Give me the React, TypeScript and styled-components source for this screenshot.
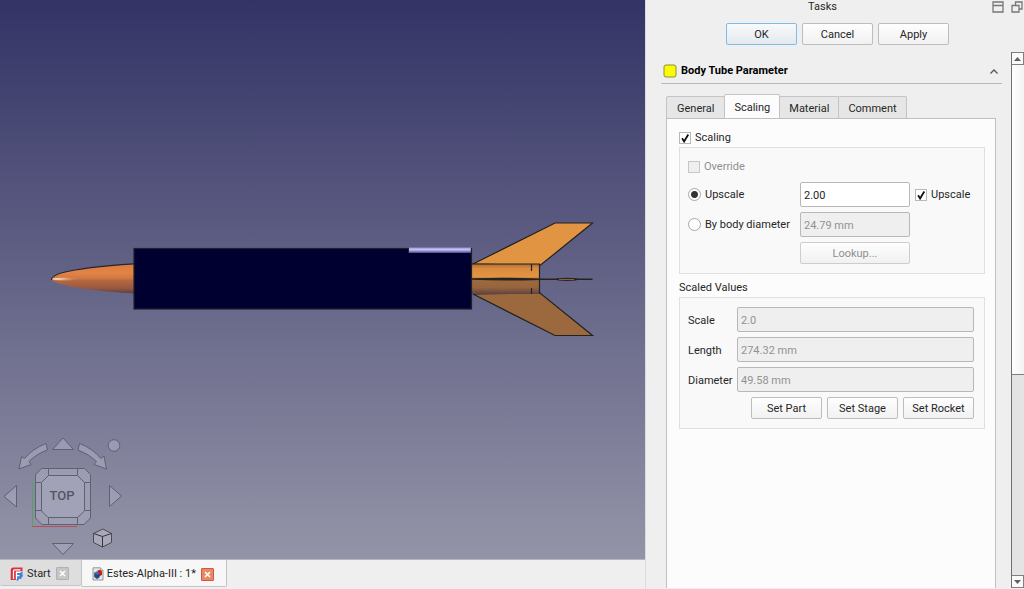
import React from "react";
import styled, { createGlobalStyle, css } from "styled-components";

const GlobalStyle = createGlobalStyle`
  *, *::before, *::after { box-sizing: border-box; }
  body { margin: 0; background: #efefef; }
  body, button, input { font-family: Roboto, "Open Sans", sans-serif; font-size: 11px; line-height: 16px; color: #262626; }
  button { cursor: default; }
`;

const Window = styled.div`
  display: grid;
  grid-template-columns: minmax(0, 1fr) 379px;
  min-height: 100vh;
`;

/* ---------- document area ---------- */

const DocumentArea = styled.main`
  display: flex;
  flex-direction: column;
  min-width: 0;
`;

const Viewport = styled.section`
  position: relative;
  flex: 1;
  min-height: 0;
  overflow: hidden;
  background: linear-gradient(#333366, #9494a8);
`;

const Scene = styled.svg`
  display: block;
  width: 100%;
  height: 100%;
`;

const NavigationCube = styled.svg`
  position: absolute;
  left: 0;
  bottom: 0;
  width: 130px;
  height: 130px;
`;

const DocumentTabs = styled.nav`
  display: flex;
  align-items: flex-start;
  height: 30px;
  border-top: 1px solid #b4b4bc;
`;

const DocumentTab = styled.div<{ $active?: boolean }>`
  display: flex;
  align-items: center;
  height: ${p => (p.$active ? 27 : 26)}px;
  padding: 2px 12px 0 10px;
  border: 1px solid #c4c4c4;
  border-top: 0;
  border-left-width: ${p => (p.$active ? 1 : 0)}px;
  border-right-width: ${p => (p.$active ? 1 : 0)}px;
  border-radius: 0 0 2px 2px;
  background: ${p => (p.$active ? "#f7f7f7" : "#dedede")};
`;

const DocumentName = styled.button`
  display: flex;
  align-items: center;
  gap: 3px;
  padding: 0;
  border: 0;
  background: none;
  white-space: nowrap;
`;

const CloseButton = styled.button<{ $hot?: boolean }>`
  display: grid;
  place-items: center;
  width: 13px;
  height: 13px;
  margin-left: 5px;
  padding: 0;
  border: 1px solid ${p => (p.$hot ? "#d9523f" : "#b2b2b2")};
  border-radius: 1px;
  background: ${p => (p.$hot ? "#e58a68" : "#c6c6c6")};
`;

/* ---------- task panel ---------- */

const TaskPanel = styled.aside`
  display: flex;
  flex-direction: column;
  border-left: 1px solid #dadae2;
  background: #efefef;
`;

const TitleBar = styled.header`
  display: flex;
  align-items: center;
  gap: 7px;
  height: 14px;
  padding: 0 1px 0 14px;
`;

const Title = styled.h1`
  flex: 1;
  margin: 0;
  font-size: 11px;
  font-weight: 400;
  text-align: center;
`;

const TitleButton = styled.button`
  display: grid;
  place-items: center;
  width: 12px;
  height: 12px;
  padding: 0;
  border: 0;
  background: none;
`;

const ButtonRow = styled.div<{ $align: "center" | "flex-end" }>`
  display: flex;
  justify-content: ${p => p.$align};
  gap: 5px;
`;

const DialogButtons = styled(ButtonRow)`
  padding: 9px 0 7px 5px;
`;

const PushButton = styled.button<{ $primary?: boolean; $wide?: boolean }>`
  width: ${p => (p.$wide ? "100%" : "71px")};
  height: 22px;
  padding: 2px 0 0;
  border: 1px solid #bdbdbd;
  border-radius: 2px;
  background: linear-gradient(#fefefe, #f1f1f1);
  white-space: nowrap;
  ${p =>
    p.$primary &&
    css`
      border-color: #7ebdeb;
      background: linear-gradient(#f8fafb, #e3e9ee);
    `}
  &:disabled {
    border-color: #cdcdcd;
    color: #8f8f8f;
  }
`;

const ScrollArea = styled.div`
  display: flex;
  flex: 1;
`;

const ScrollContent = styled.div`
  display: flex;
  flex: 1;
  flex-direction: column;
  min-width: 0;
  padding: 8px 9px 0 15px;
`;

const SectionHeader = styled.button`
  display: flex;
  align-items: center;
  gap: 4px;
  height: 24px;
  padding: 0 3px 1px 2px;
  border: 0;
  border-bottom: 1px solid #bababa;
  background: none;
  color: #000;
  font-size: 11px;
  font-weight: 700;
  text-align: left;
`;

const SectionName = styled.span`
  flex: 1;
`;

const TabList = styled.div`
  display: flex;
  align-items: flex-end;
  height: 34px;
  margin: 0 6px 0 5px;
`;

const Tab = styled.button<{ $active?: boolean }>`
  height: 22px;
  margin-left: -1px;
  padding: 2px 9px 0;
  border: 1px solid #c4c4c4;
  border-bottom: 0;
  border-radius: 2px 2px 0 0;
  background: #e6e6e6;
  &:first-child {
    margin-left: 0;
    padding: 2px 10px 0;
  }
  ${p =>
    p.$active &&
    css`
      height: 24px;
      background: #fcfcfc;
      z-index: 1;
    `}
`;

const TabPage = styled.div`
  flex: 1;
  margin: 0 6px 1px 5px;
  padding: 10px 10px 0 12px;
  border: 1px solid #c0c0c0;
  border-bottom: 0;
  background: #fcfcfc;
`;

const GroupTitle = styled.div`
  display: flex;
  align-items: center;
  height: 18px;
`;

const Group = styled.section`
  margin-bottom: 5px;
`;

const GroupBox = styled.div`
  display: grid;
  gap: 5px;
  padding: 9px 10px 9px 8px;
  border: 1px solid #e0e0e0;
  background: #f9f9f9;
`;

const ScalingRow = styled.div`
  display: grid;
  grid-template-columns: 107px minmax(0, 1fr) 59px;
  align-items: center;
  gap: 5px;
  min-height: 20px;
`;

const ButtonCell = styled.div`
  grid-column: 2;
`;

const FieldRow = styled.div`
  display: grid;
  grid-template-columns: 44px minmax(0, 1fr);
  align-items: center;
  gap: 5px;
`;

const FieldLabel = styled.label`
  padding-top: 2px;
`;

const ChoiceLabel = styled.label<{ $disabled?: boolean }>`
  display: flex;
  align-items: center;
  gap: 4px;
  white-space: nowrap;
  color: ${p => (p.$disabled ? "#8f8f8f" : "inherit")};
`;

const checkMark =
  "url(\"data:image/svg+xml,%3Csvg xmlns='http://www.w3.org/2000/svg' viewBox='0 0 11 11'%3E%3Cpath d='M2.5 5.6 4.4 8.6 8.4 1.9' fill='none' stroke='%23111' stroke-width='1.7'/%3E%3C/svg%3E\")";

const CheckBox = styled.input.attrs({ type: "checkbox" })`
  appearance: none;
  flex: none;
  width: 12px;
  height: 12px;
  margin: 0;
  border: 1px solid #b8b8b8;
  background: #fff;
  &:checked {
    background: #fff ${checkMark} center / 11px 11px no-repeat;
  }
  &:disabled {
    border-color: #c6c6c6;
    background: #efefef;
  }
`;

const RadioButton = styled.input.attrs({ type: "radio" })`
  appearance: none;
  flex: none;
  width: 13px;
  height: 13px;
  margin: 0;
  border: 1px solid #a8a8a8;
  border-radius: 50%;
  background: #fff;
  &:checked {
    background: radial-gradient(circle, #333 0 3px, #fff 4px);
  }
`;

const TextField = styled.input.attrs({ type: "text" })`
  width: 100%;
  height: 25px;
  padding: 2px 3px 0;
  border: 1px solid #b8b8b8;
  border-radius: 2px;
  background: #fff;
  &:disabled {
    background: #efefef;
    color: #929292;
  }
`;

const ScrollBar = styled.div`
  display: flex;
  flex-direction: column;
  width: 13px;
  margin-bottom: 1px;
  border-left: 1px solid #707070;
  background: #e4e4e4;
`;

const ScrollArrow = styled.button`
  display: grid;
  place-items: center;
  height: 13px;
  padding: 0;
  border: 1px solid #808080;
  border-left: 0;
  background: #fafafa;
`;

const ScrollHandle = styled.div`
  flex: 309;
  border-bottom: 1px solid #808080;
  background: linear-gradient(90deg, #fff, #f3f3f3);
`;

const ScrollTrack = styled.div`
  flex: 200;
`;

const Cross = () => (
  <svg width="7" height="7" viewBox="0 0 7 7" aria-hidden="true">
    <path d="M1 1 6 6M6 1 1 6" stroke="#fff" strokeWidth="1.5" />
  </svg>
);

const Arrow = ({ down }: { down?: boolean }) => (
  <svg width="7" height="4" viewBox="0 0 7 4" aria-hidden="true">
    <path d={down ? "M0 0H7L3.5 4Z" : "M0 4H7L3.5 0Z"} fill="#606060" />
  </svg>
);

const StartIcon = () => (
  <svg width="14" height="14" viewBox="0 0 14 14" aria-hidden="true">
    <path d="M5.500 5.300H13L12.200 7.600 13.300 9 11.600 10.200 11.300 12 9.300 11.800 7.600 14 5.500 12.500Z" fill="#3a83d8" />
    <path d="M3 .5H12.500V4.300H5.800V13H.7V3Q.7 .5 3 .5Z" fill="#df303c" />
    <path d="M3.500 12V4Q3.500 2.800 4.700 2.800H10.500M6.500 12.500V5.500H10.500M6.500 8.600H9.500" fill="none" stroke="#fff" strokeWidth="1.200" />
  </svg>
);

const DocumentIcon = () => (
  <svg width="12" height="14" viewBox="0 0 12 14" aria-hidden="true">
    <path d="M1 .8H8.3L11 3.5V13H1Z" fill="#e6e8e6" stroke="#8a8c8a" strokeWidth=".9" />
    <path d="M8.3 .8V3.5H11" fill="#c9cbc9" stroke="#8a8c8a" strokeWidth=".6" />
    <path d="M5.500 3.500 8 2.700 10 4.500V7.800L7.500 9.400 5.500 7.600Z" fill="#c91d20" />
    <path d="M2.200 6 4.800 4.600 7.500 6.600V10.600L5 12 2.200 10Z" fill="#204a87" />
    <path d="M2.200 6 4.800 4.600 7.500 6.600 5 7.800Z" fill="#3c73b7" />
  </svg>
);

const RocketScene = () => (
  <Scene viewBox="0 0 645 559" preserveAspectRatio="xMidYMid slice" role="img" aria-label="Side view of the rocket model">
    <defs>
      <linearGradient id="nose" x1="0" y1="0" x2="0" y2="1">
        <stop offset="0" stopColor="#d97a40" />
        <stop offset=".3" stopColor="#e48345" />
        <stop offset=".49" stopColor="#cf7744" />
        <stop offset=".55" stopColor="#b56943" />
        <stop offset=".82" stopColor="#99583f" />
        <stop offset="1" stopColor="#5c3d42" />
      </linearGradient>
      <radialGradient id="shine" cx=".2" cy=".5" r=".8">
        <stop offset="0" stopColor="#fff6e8" />
        <stop offset="1" stopColor="#e58b52" stopOpacity="0" />
      </radialGradient>
      <linearGradient id="tube" x1="0" y1="0" x2="0" y2="1">
        <stop offset="0" stopColor="#a96c35" />
        <stop offset=".15" stopColor="#db8b3e" />
        <stop offset=".43" stopColor="#e19442" />
        <stop offset=".5" stopColor="#9d6a3f" />
        <stop offset=".78" stopColor="#98643d" />
        <stop offset="1" stopColor="#5f4440" />
      </linearGradient>
      <linearGradient id="lug" x1="0" y1="0" x2="0" y2="1">
        <stop offset="0" stopColor="#9d95d2" />
        <stop offset=".4" stopColor="#c9c1fa" />
        <stop offset=".7" stopColor="#8b85c3" />
        <stop offset="1" stopColor="#4b4777" />
      </linearGradient>
    </defs>
    <path d="M134 264C108 265.500 80 268 63 272.500C56 274.500 51.500 277 51.500 279.500C53 283 65 285.500 76 287.500C98 291 119 292.500 134 293.500Z" fill="url(#nose)" />
    <path d="M134 263.800C108 265.500 80 268 63 272.500C56 274.500 51.500 277 51.500 280" fill="none" stroke="#26262c" strokeWidth="1.200" />
    <ellipse cx="65" cy="279" rx="13" ry="1.700" fill="url(#shine)" />
    <path d="M473 264 555 223H592.500L540 265.500Z" fill="#e19442" stroke="#222" strokeWidth="1.200" />
    <path d="M473 294 555 335.500H592.500L540 293Z" fill="#9c683d" stroke="#222" strokeWidth="1.200" />
    <rect x="471.500" y="264" width="68" height="30" fill="url(#tube)" />
    <path d="M471.500 264H539.500V293.500M531.500 264V271M531.500 288V294" fill="none" stroke="#222" strokeWidth="1.200" />
    <path d="M471 278.300Q505 277 540 278.500H592.500V279.900H540Q505 281 471 279.800Z" fill="#26221f" />
    <ellipse cx="567" cy="279.300" rx="12" ry="1.600" fill="#262421" />
    <rect x="559" y="279" width="15" height="1" fill="#866043" />
    <rect x="134" y="248.500" width="337.500" height="60.500" fill="#000030" stroke="#1d1f2a" strokeWidth="1.200" />
    <rect x="409" y="247.500" width="62" height="5.500" fill="url(#lug)" />
    <path d="M408.500 248V253M471.300 248V309" stroke="#20212a" />
  </Scene>
);

const ViewCube = () => (
  <NavigationCube viewBox="0 429 130 130" role="img" aria-label="Navigation cube, top view">
    <g fill="#a3a3b9" fillOpacity=".75" stroke="#60606f" strokeWidth="1" strokeLinejoin="round">
      <path d="M63 438 73.500 449.500H52.500Z" />
      <path d="M63 554.500 73.500 543.500H52.500Z" />
      <path d="M4 496.500 16.500 485.500V507Z" />
      <path d="M121.500 496 109.500 485.500V506.500Z" />
      <circle cx="114" cy="445.500" r="5.800" />
      <path d="M46 443.500 47.500 450Q37 453.500 29 461.500L31 464.500 19 469 21.500 456.500 24.500 458.500Q33 448.500 46 443.500Z" />
      <path d="M79.500 443.500 78 450Q89 454 96.500 461.500L94 464.500 106.500 469 104 456 101 458.500Q92 448 79.500 443.500Z" />
      <path d="M41.500 468.500H84.500L90.500 474.500V518L84 524.500H42L35.500 518V475Z" />
      <path d="M48.500 475.500H77.500L84.500 482.500V511L77.500 517.500H48L41.500 511V482.500Z" />
      <path d="M48.500 468.500V475.500M77.500 468.500V475.500M48.500 517.500V524.500M77.500 517.500V524.500M35.500 482.500H41.500M84.500 482.500H90.500M35.500 510.500H41.500M84.500 510.500H90.500" fill="none" />
    </g>
    <path d="M32.500 482V527" stroke="#55a364" />
    <path d="M32 526.500H77" stroke="#b8505c" />
    <path d="M93.500 533.500 103 529 111.500 533.500V542.500L102.500 547 93.500 542.500Z" fill="#a8a8b8" stroke="#4b4b57" />
    <path d="M93.500 533.500 102.500 536.500 111.500 533.500M102.500 536.500V547" fill="none" stroke="#34343e" />
    <text x="62" y="500" textAnchor="middle" fontFamily="Roboto, sans-serif" fontSize="13" fontWeight="500" fill="#555563">TOP</text>
  </NavigationCube>
);

export default function App() {
  return (
    <>
      <GlobalStyle />
      <Window>
        <DocumentArea>
          <Viewport>
            <RocketScene />
            <ViewCube />
          </Viewport>
          <DocumentTabs aria-label="Open documents">
            <DocumentTab>
              <DocumentName><StartIcon />Start</DocumentName>
              <CloseButton aria-label="Close Start"><Cross /></CloseButton>
            </DocumentTab>
            <DocumentTab $active>
              <DocumentName><DocumentIcon />Estes-Alpha-III : 1*</DocumentName>
              <CloseButton $hot aria-label="Close Estes-Alpha-III"><Cross /></CloseButton>
            </DocumentTab>
          </DocumentTabs>
        </DocumentArea>

        <TaskPanel>
          <TitleBar>
            <Title>Tasks</Title>
            <TitleButton aria-label="Collapse panel">
              <svg width="12" height="12" viewBox="0 0 12 12"><path d="M1 1H11V11H1ZM1 4.500H11" fill="none" stroke="#777" strokeWidth="1.300" /></svg>
            </TitleButton>
            <TitleButton aria-label="Float panel">
              <svg width="12" height="12" viewBox="0 0 12 12"><path d="M4.500 4.500V1H11V8H8M1 4.500H8V11H1Z" fill="none" stroke="#777" strokeWidth="1.300" /></svg>
            </TitleButton>
          </TitleBar>
          <DialogButtons $align="center">
            <PushButton $primary>OK</PushButton>
            <PushButton>Cancel</PushButton>
            <PushButton>Apply</PushButton>
          </DialogButtons>
          <ScrollArea>
            <ScrollContent>
              <SectionHeader aria-expanded="true">
                <svg width="14" height="14" viewBox="0 0 14 14" aria-hidden="true">
                  <rect x="1" y="1" width="12" height="12" rx="2" fill="#fcfc00" stroke="#8d8d45" />
                </svg>
                <SectionName>Body Tube Parameter</SectionName>
                <svg width="10" height="7" viewBox="0 0 10 7" aria-hidden="true">
                  <path d="M1.500 5.500 5 2 8.500 5.500" fill="none" stroke="#555" strokeWidth="1.300" />
                </svg>
              </SectionHeader>
              <TabList role="tablist">
                <Tab role="tab">General</Tab>
                <Tab role="tab" aria-selected="true" $active>Scaling</Tab>
                <Tab role="tab">Material</Tab>
                <Tab role="tab">Comment</Tab>
              </TabList>
              <TabPage role="tabpanel">
                <Group>
                  <GroupTitle>
                    <ChoiceLabel><CheckBox defaultChecked />Scaling</ChoiceLabel>
                  </GroupTitle>
                  <GroupBox>
                    <ScalingRow>
                      <ChoiceLabel $disabled><CheckBox disabled />Override</ChoiceLabel>
                    </ScalingRow>
                    <ScalingRow>
                      <ChoiceLabel><RadioButton name="scale-mode" defaultChecked />Upscale</ChoiceLabel>
                      <TextField aria-label="Upscale factor" defaultValue="2.00" />
                      <ChoiceLabel><CheckBox defaultChecked />Upscale</ChoiceLabel>
                    </ScalingRow>
                    <ScalingRow>
                      <ChoiceLabel><RadioButton name="scale-mode" />By body diameter</ChoiceLabel>
                      <TextField aria-label="Body diameter" defaultValue="24.79 mm" disabled />
                    </ScalingRow>
                    <ScalingRow>
                      <ButtonCell><PushButton $wide disabled>Lookup...</PushButton></ButtonCell>
                    </ScalingRow>
                  </GroupBox>
                </Group>
                <Group>
                  <GroupTitle>Scaled Values</GroupTitle>
                  <GroupBox>
                    <FieldRow>
                      <FieldLabel htmlFor="scale">Scale</FieldLabel>
                      <TextField id="scale" defaultValue="2.0" disabled />
                    </FieldRow>
                    <FieldRow>
                      <FieldLabel htmlFor="length">Length</FieldLabel>
                      <TextField id="length" defaultValue="274.32 mm" disabled />
                    </FieldRow>
                    <FieldRow>
                      <FieldLabel htmlFor="diameter">Diameter</FieldLabel>
                      <TextField id="diameter" defaultValue="49.58 mm" disabled />
                    </FieldRow>
                    <ButtonRow $align="flex-end">
                      <PushButton>Set Part</PushButton>
                      <PushButton>Set Stage</PushButton>
                      <PushButton>Set Rocket</PushButton>
                    </ButtonRow>
                  </GroupBox>
                </Group>
              </TabPage>
            </ScrollContent>
            <ScrollBar>
              <ScrollArrow aria-label="Scroll up"><Arrow /></ScrollArrow>
              <ScrollHandle />
              <ScrollTrack />
              <ScrollArrow aria-label="Scroll down"><Arrow down /></ScrollArrow>
            </ScrollBar>
          </ScrollArea>
        </TaskPanel>
      </Window>
    </>
  );
}
